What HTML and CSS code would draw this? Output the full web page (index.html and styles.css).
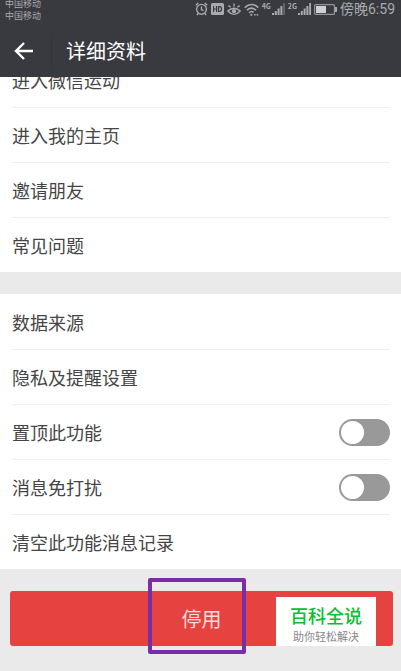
FILE: index.html
```html
<!DOCTYPE html>
<html lang="zh-CN">
<head>
<meta charset="utf-8">
<meta name="viewport" content="width=device-width, initial-scale=1">
<title>详细资料</title>
<link rel="stylesheet" href="styles.css">
</head>
<body>
<header class="top">
  <div class="status">
    <div class="carriers"><span>中国移动</span><span>中国移动</span></div>
    <div class="indicators">
      <svg width="13" height="14" viewBox="0 0 13 14" fill="none" stroke="currentColor" stroke-width="1.4"><circle cx="6.5" cy="7.3" r="4.9"/><path d="M6.5 4.5v3l2 1.2M.8 3.3 3.3 1M12.2 3.3 9.7 1M3 11.5l-1 1.5M10 11.5l1 1.5"/></svg>
      <svg width="13" height="12" viewBox="0 0 13 12"><rect width="13" height="12" rx="1.5" fill="currentColor"/><path d="M2.6 3v6M5.6 3v6M2.6 6h3M7.6 3.6v4.8h1.2c2.3 0 2.3-4.8 0-4.8z" fill="none" stroke="#393a3f" stroke-width="1.2"/></svg>
      <svg width="14" height="13" viewBox="0 0 14 13" fill="none" stroke="currentColor" stroke-width="1.4"><path d="M.8 8Q7 2.4 13.2 8 7 14.8.8 8zM7 3.4V.6M3.6 4.2 1.4 2.6M10.4 4.2l2.2-1.6"/><circle cx="7" cy="8.2" r="2.1" fill="currentColor" stroke="none"/></svg>
      <svg width="15" height="13" viewBox="0 0 15 13" fill="none" stroke="currentColor" stroke-width="1.5"><path d="M.7 4.6Q7.5-1.6 14.3 4.6M2.9 7.3Q7.5 3 12.1 7.3M5 9.8Q7.5 7.4 9.6 9.4"/><circle cx="7.3" cy="11.8" r="1.1" fill="currentColor" stroke="none"/><path d="M10 11.8h1.6M12.6 11.8h1.6"/></svg>
      <span class="signal"><small>4G</small><svg width="13" height="12" viewBox="0 0 13 12" fill="currentColor"><path d="M0 10h2v2H0zM2.8 8h2v4h-2zM5.6 5.5h2V12h-2zM8.4 3h2v9h-2z"/><path d="M11.2 0H13v12h-1.8z" opacity=".4"/></svg></span>
      <span class="signal"><small>2G</small><svg width="13" height="12" viewBox="0 0 13 12" fill="currentColor"><path d="M0 10h2v2H0zM2.8 8h2v4h-2zM5.6 5.5h2V12h-2zM8.4 3h2v9h-2zM11.2 0H13v12h-1.8z"/></svg></span>
      <svg width="23" height="11" viewBox="0 0 23 11"><rect x=".6" y=".6" width="19.8" height="9.8" rx="1" fill="none" stroke="currentColor" stroke-width="1.2" opacity=".8"/><path d="M2 2h10v7H2z" fill="#d0d0d2"/><path d="M21 3h2v5h-2z" fill="currentColor"/></svg>
      <time>傍晚6:59</time>
    </div>
  </div>
  <div class="titlebar">
    <button class="back" type="button" aria-label="返回"><svg width="20" height="18" viewBox="0 0 20 18" fill="none" stroke="currentColor" stroke-width="2.4"><path d="M19 9H2.5M10 1 2 9l8 8"/></svg></button>
    <h1>详细资料</h1>
  </div>
</header>
<main>
  <ul class="group scrolled">
    <li><a href="#sport">进入微信运动</a></li>
    <li><a href="#home">进入我的主页</a></li>
    <li><a href="#invite">邀请朋友</a></li>
    <li><a href="#faq">常见问题</a></li>
  </ul>
  <ul class="group">
    <li><a href="#source">数据来源</a></li>
    <li><a href="#privacy">隐私及提醒设置</a></li>
    <li><label for="pin">置顶此功能</label><input class="switch" id="pin" type="checkbox"></li>
    <li><label for="mute">消息免打扰</label><input class="switch" id="mute" type="checkbox"></li>
    <li><a href="#clear">清空此功能消息记录</a></li>
  </ul>
  <div class="action">
    <button class="disable" type="button">停用</button>
    <div class="highlight"></div>
    <div class="badge"><strong>百科全说</strong><span>助你轻松解决</span></div>
  </div>
</main>
</body>
</html>
```
FILE: styles.css
```css
* {
  box-sizing: border-box;
}

body {
  margin: 0;
  background: #eaeaea;
  color: #454545;
  font-family: "Noto Sans CJK SC", sans-serif;
  font-size: 18px;
}

.top {
  position: sticky;
  top: 0;
  z-index: 2;
  background: #393a3f;
  color: #fff;
}

.status {
  display: flex;
  justify-content: space-between;
  height: 24px;
  padding: 0 6px 0 5px;
  overflow: hidden;
  color: #a9aaad;
}

.carriers {
  display: flex;
  flex-direction: column;
  justify-content: flex-end;
  font-size: 9px;
  line-height: 12px;
  padding-bottom: 2px;
}

.indicators {
  display: flex;
  align-items: center;
  gap: 3px;
  height: 18px;
}

.signal {
  display: flex;
  align-items: center;
  gap: 1px;
}

.signal small {
  align-self: flex-start;
  font-size: 7px;
  font-weight: 700;
  line-height: 6px;
}

.indicators time {
  font-family: Roboto, "Noto Sans CJK SC", sans-serif;
  font-size: 14px;
  line-height: 18px;
}

.titlebar {
  display: flex;
  align-items: center;
  height: 53px;
}

.back {
  display: flex;
  align-items: center;
  width: 52px;
  height: 32px;
  padding: 0 0 0 14px;
  border: 0;
  border-right: 1px solid #34353a;
  background: none;
  color: inherit;
}

h1 {
  margin: 0 0 0 14px;
  font-size: 20px;
  font-weight: 400;
  line-height: 28px;
}

.group {
  margin: 0 0 22px;
  padding: 0 11px 0 12px;
  background: #fff;
  list-style: none;
}

.scrolled {
  margin-top: -25px;
}

.group li {
  display: flex;
  align-items: center;
  justify-content: space-between;
  height: 55px;
}

.group li + li {
  border-top: 1px solid #efefef;
}

.group a {
  flex: 1;
  color: inherit;
  text-decoration: none;
}

.switch {
  appearance: none;
  width: 51px;
  height: 27px;
  margin: 0;
  padding: 2px;
  border-radius: 14px;
  background: #999;
}

.switch::before {
  content: "";
  display: block;
  width: 23px;
  height: 23px;
  border-radius: 50%;
  background: #fff;
}

.switch:checked {
  background: #1aad19;
}

.switch:checked::before {
  margin-left: auto;
}

.action {
  position: relative;
  margin: 0 8px 24px 10px;
}

.disable {
  display: block;
  width: 100%;
  height: 55px;
  border: 0;
  border-radius: 3px;
  background: #e64340;
  color: #fbdcdb;
  font: 20px/28px "Noto Sans CJK SC", sans-serif;
}

.highlight {
  position: absolute;
  top: -13px;
  left: calc(50% - 54px);
  width: 98px;
  height: 76px;
  border: 4px solid #7a2da8;
  border-radius: 2px;
  pointer-events: none;
}

.badge {
  position: absolute;
  right: 17px;
  bottom: 0;
  display: flex;
  flex-direction: column;
  align-items: center;
  width: 100px;
  padding: 5px 0 2px;
  background: #fff;
}

.badge strong {
  color: #08bf30;
  font-size: 18px;
  font-weight: 500;
  line-height: 26px;
}

.badge span {
  color: #888;
  font-size: 11px;
  line-height: 16px;
}
```
